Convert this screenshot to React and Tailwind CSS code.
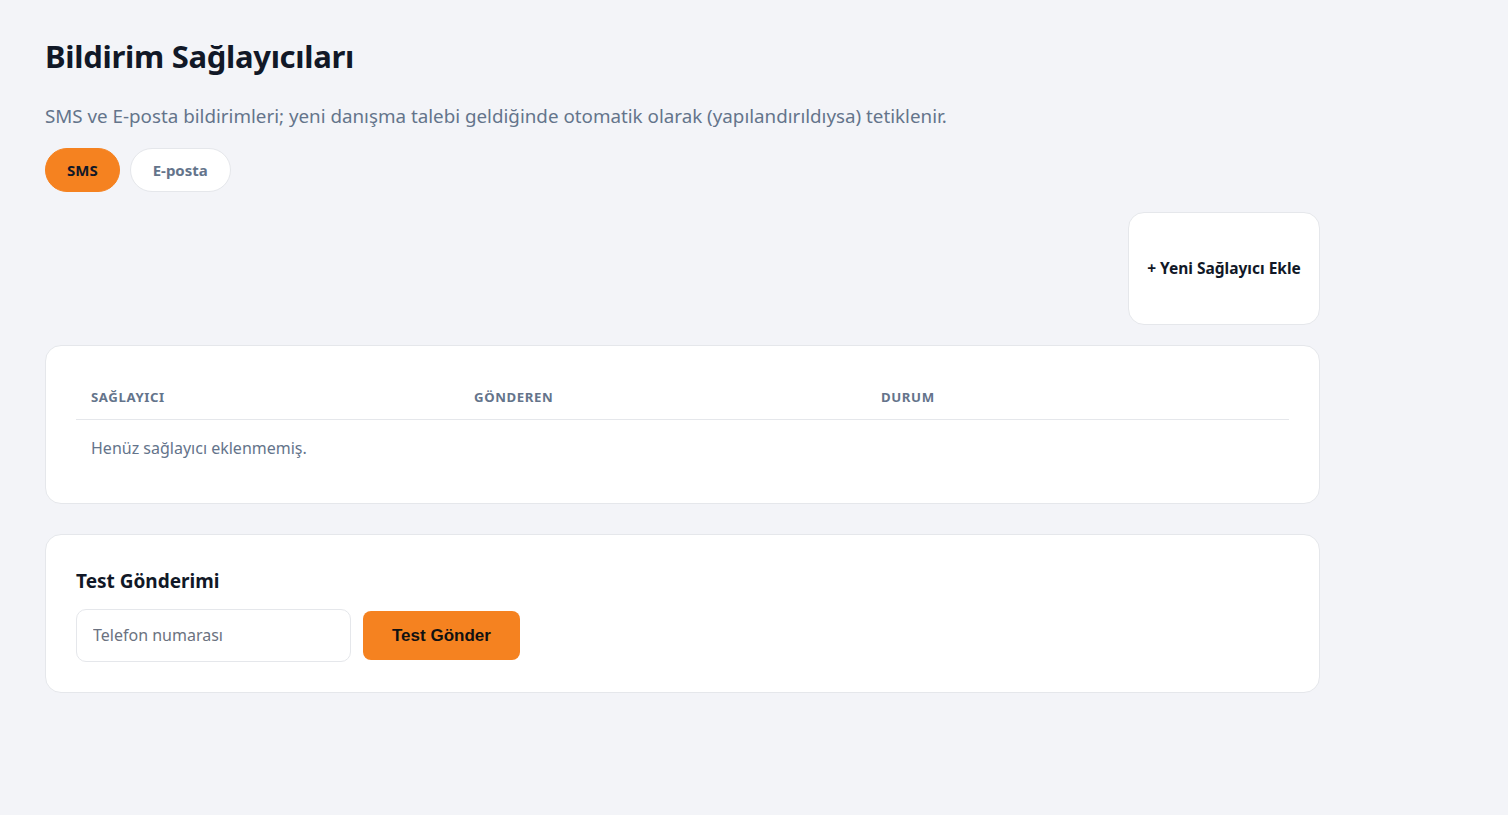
import { useState } from 'react';

const font = { fontFamily: '"Noto Sans", "Open Sans", sans-serif' };

const App = () => {
    const [tab, setTab] = useState('sms');
    const [phone, setPhone] = useState('');

    return (
        <div className="min-h-screen bg-[#f3f4f8] text-[#111827]" style={font}>
            <div className="w-[1275px] ml-[45px] pt-[34px]">
                <h1 className="text-[31px] font-bold leading-[44px] text-[#111827] tracking-[-0.3px]">Bildirim Sağlayıcıları</h1>
                <p className="mt-[24px] text-[18.8px] leading-[28px] text-[#64748b]">
                    SMS ve E-posta bildirimleri; yeni danışma talebi geldiğinde otomatik olarak (yapılandırıldıysa) tetiklenir.
                </p>

                {/* Tabs */}
                <div className="flex gap-[10px] mt-[18px]">
                    <button
                        onClick={() => setTab('sms')}
                        className={`h-[44px] px-[21px] rounded-full text-[15px] font-bold border ${tab === 'sms' ? 'bg-[#f58220] border-[#f58220] text-[#111827]' : 'bg-white border-[#e5e7eb] text-[#64748b]'}`}
                    >
                        SMS
                    </button>
                    <button
                        onClick={() => setTab('email')}
                        className={`h-[44px] px-[22px] rounded-full text-[15px] font-bold border ${tab === 'email' ? 'bg-[#f58220] border-[#f58220] text-[#111827]' : 'bg-white border-[#e5e7eb] text-[#64748b]'}`}
                    >
                        E-posta
                    </button>
                </div>

                <div className="flex justify-end mt-[20px]">
                    <button className="w-[192px] h-[113px] bg-white border border-[#e5e7eb] rounded-[16px] text-[15.5px] font-bold text-[#111827]">
                        + Yeni Sağlayıcı Ekle
                    </button>
                </div>

                {/* Providers table */}
                <div className="mt-[20px] bg-white border border-[#e5e7eb] rounded-[16px] px-[30px] pt-[42px] pb-[43px]">
                    <table className="w-full text-left">
                        <thead>
                            <tr className="border-b border-[#e5e7eb]">
                                <th className="w-[383px] px-[15px] pb-[11px] text-[13.2px] font-bold uppercase tracking-[0.6px] text-[#64748b]">Sağlayıcı</th>
                                <th className="w-[407px] px-[15px] pb-[11px] text-[13.2px] font-bold uppercase tracking-[0.6px] text-[#64748b]">Gönderen</th>
                                <th className="px-[15px] pb-[11px] text-[13.2px] font-bold uppercase tracking-[0.6px] text-[#64748b]">Durum</th>
                            </tr>
                        </thead>
                        <tbody>
                            <tr>
                                <td colSpan={3} className="px-[15px] pt-[16px] text-[16px] leading-[24px] text-[#64748b]">Henüz sağlayıcı eklenmemiş.</td>
                            </tr>
                        </tbody>
                    </table>
                </div>

                {/* Test send */}
                <div className="mt-[30px] bg-white border border-[#e5e7eb] rounded-[16px] px-[30px] pt-[32px] pb-[30px]">
                    <h2 className="text-[19px] font-bold leading-[28px] text-[#111827]">Test Gönderimi</h2>
                    <div className="flex items-center gap-[12px] mt-[14px]">
                        <input
                            type="tel"
                            value={phone}
                            onChange={(e) => setPhone(e.target.value)}
                            placeholder="Telefon numarası"
                            className="w-[275px] h-[53px] px-[16px] rounded-[10px] border border-[#e5e7eb] text-[16px] placeholder:text-[#6b7280] outline-none"
                        />
                        <button
                            className="h-[49px] px-[29px] rounded-[8px] bg-[#f58220] text-[17px] font-bold text-[#111111]"
                            style={{ fontFamily: '"Liberation Sans", Arial, sans-serif' }}
                        >
                            Test Gönder
                        </button>
                    </div>
                </div>
            </div>
        </div>
    );
};

export default App;
